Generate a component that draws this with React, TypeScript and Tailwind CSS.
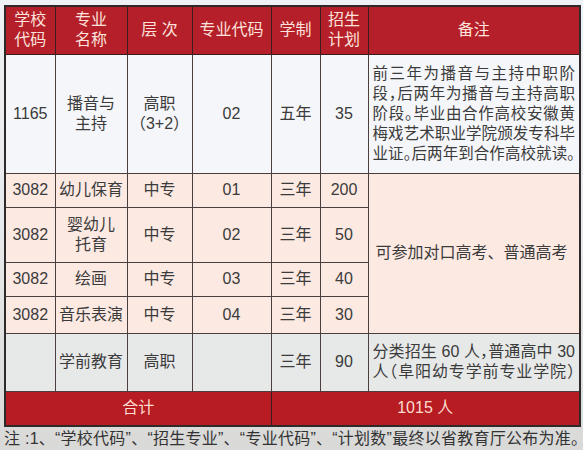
const FONT = { fontFamily: '"Liberation Sans", "Noto Sans CJK SC", sans-serif' }

const HEAD = [
  ["学校", "代码"],
  ["专业", "名称"],
  ["层 次"],
  ["专业代码"],
  ["学制"],
  ["招生", "计划"],
  ["备注"],
]

const REMARK_1 = [
  "前三年为播音与主持中职阶",
  "段，后两年为播音与主持高职",
  "阶段。毕业由合作高校安徽黄",
  "梅戏艺术职业学院颁发专科毕",
  "业证。后两年到合作高校就读。",
]

const td = "border border-[#4a3f3c] text-center align-middle p-0"
const line = "whitespace-nowrap [text-align-last:justify] [text-align:justify] [font-feature-settings:'halt']"

export default function App() {
  return (
    <div
      className="w-[583px] h-[450px] overflow-hidden bg-gradient-to-b from-[#eef1f5] via-[#e8e9ea] to-[#d9d9d8] text-[#3b3b3b]"
      style={FONT}
    >
      <div className="pt-[5px] pl-[4px]">
        <table className="table-fixed border-collapse w-[575px] border-2 border-[#2e2a2a] text-[16px] leading-[20px]">
          <colgroup>
            <col className="w-[50px]" />
            <col className="w-[72px]" />
            <col className="w-[65px]" />
            <col className="w-[79px]" />
            <col className="w-[49px]" />
            <col className="w-[48px]" />
            <col className="w-[212px]" />
          </colgroup>
          <thead>
            <tr className="h-[48px] bg-[#b41f29] text-[#fde3dc]">
              {HEAD.map((h, i) => (
                <th key={i} className="border border-[#3b1d1d] font-normal text-center align-middle p-0">
                  {h.map((l) => (
                    <div key={l}>{l}</div>
                  ))}
                </th>
              ))}
            </tr>
          </thead>
          <tbody>
            <tr className="h-[119px] bg-[#f5f6f9]">
              <td className={td}>1165</td>
              <td className={td}>
                <div>播音与</div>
                <div>主持</div>
              </td>
              <td className={td}>
                <div>高职</div>
                <div>（3+2）</div>
              </td>
              <td className={td}>02</td>
              <td className={td}>五年</td>
              <td className={td}>35</td>
              <td className={`${td} px-[4px] text-left text-[15.5px]`}>
                {REMARK_1.map((l) => (
                  <div key={l} className={line}>{l}</div>
                ))}
              </td>
            </tr>
            <tr className="h-[34px] bg-[#fbe9e2]">
              <td className={td}>3082</td>
              <td className={td}>幼儿保育</td>
              <td className={td}>中专</td>
              <td className={td}>01</td>
              <td className={td}>三年</td>
              <td className={td}>200</td>
              <td className={`${td} text-left pl-[7px]`} rowSpan={4}>
                可参加对口高考、普通高考
              </td>
            </tr>
            <tr className="h-[55px] bg-[#fbe9e2]">
              <td className={td}>3082</td>
              <td className={td}>
                <div>婴幼儿</div>
                <div>托育</div>
              </td>
              <td className={td}>中专</td>
              <td className={td}>02</td>
              <td className={td}>三年</td>
              <td className={td}>50</td>
            </tr>
            <tr className="h-[34px] bg-[#fbe9e2]">
              <td className={td}>3082</td>
              <td className={td}>绘画</td>
              <td className={td}>中专</td>
              <td className={td}>03</td>
              <td className={td}>三年</td>
              <td className={td}>40</td>
            </tr>
            <tr className="h-[37px] bg-[#fbe9e2]">
              <td className={td}>3082</td>
              <td className={td}>音乐表演</td>
              <td className={td}>中专</td>
              <td className={td}>04</td>
              <td className={td}>三年</td>
              <td className={td}>30</td>
            </tr>
            <tr className="h-[58px] bg-[#e7e8e8]">
              <td className={td}></td>
              <td className={td}>学前教育</td>
              <td className={td}>高职</td>
              <td className={td}></td>
              <td className={td}>三年</td>
              <td className={td}>90</td>
              <td className={`${td} px-[4px] text-left`}>
                <div className={line}>分类招生 60 人，普通高中 30</div>
                <div className={line}>人（阜阳幼专学前专业学院）</div>
              </td>
            </tr>
            <tr className="h-[35px] bg-[#b81c23] text-[#fcdccf]">
              <td className="border border-[#3b1d1d] text-center" colSpan={4}>合计</td>
              <td className="border border-[#3b1d1d] text-center" colSpan={3}>1015 人</td>
            </tr>
          </tbody>
        </table>
        <p className="mt-[2px] text-[16px] leading-[20px] tracking-[0.25px] text-[#333] whitespace-nowrap">
          注 :1、“学校代码”、“招生专业”、“专业代码”、“计划数”最终以省教育厅公布为准。
        </p>
      </div>
    </div>
  )
}
